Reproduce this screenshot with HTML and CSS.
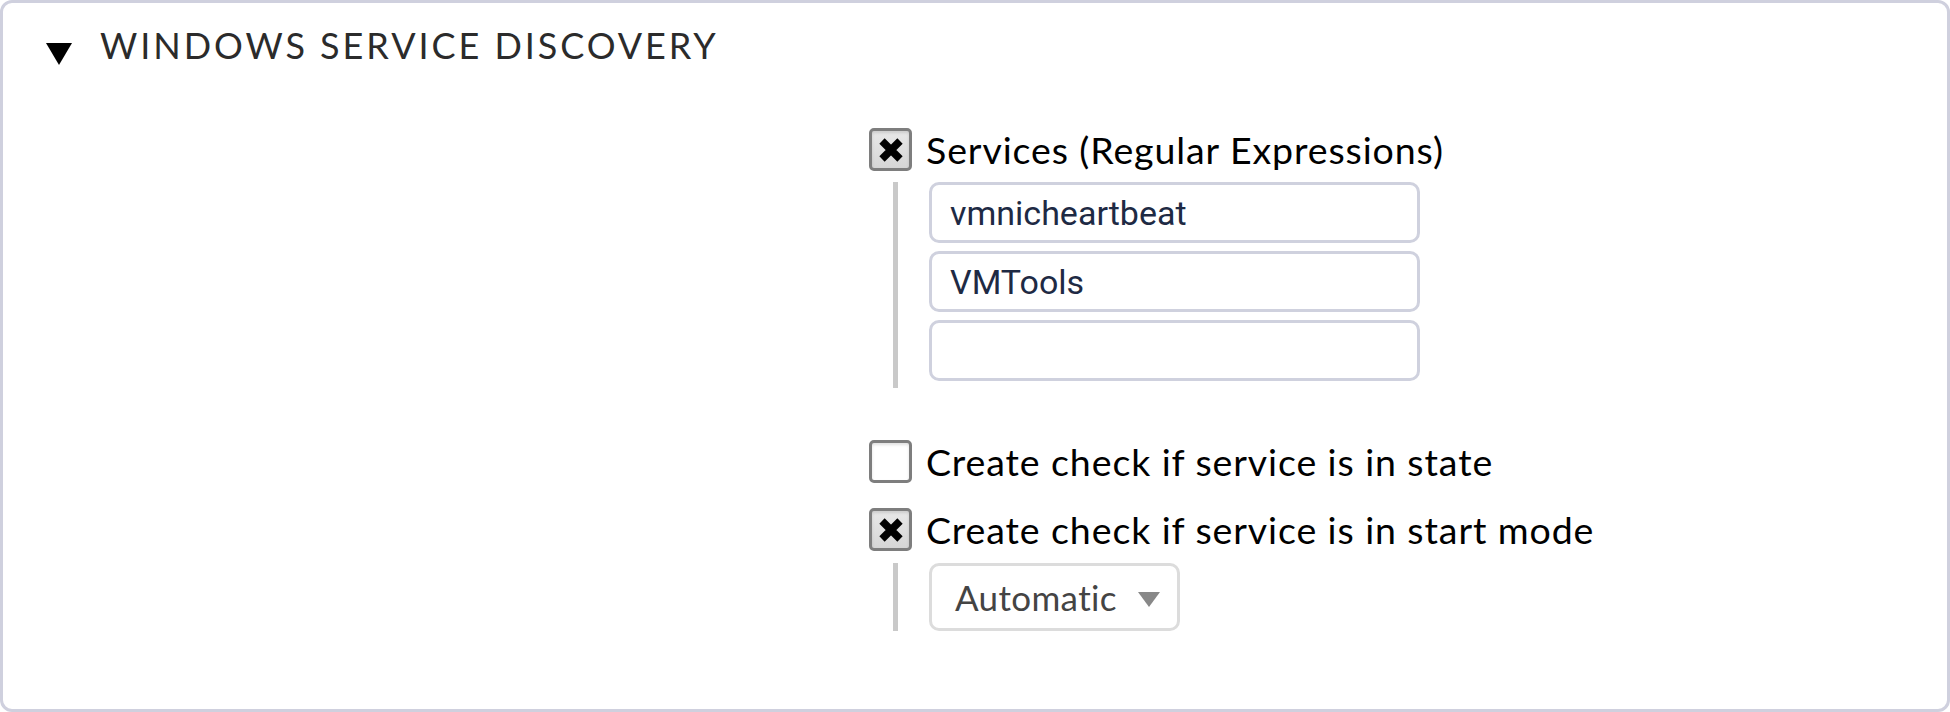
FILE: index.html
```html
<!DOCTYPE html>
<html>
<head>
<meta charset="utf-8">
<link rel="stylesheet" href="styles.css">
</head>
<body>
<div class="box">
  <div class="legend">
    <span class="tri"></span>
    <span class="title">WINDOWS SERVICE DISCOVERY</span>
  </div>
  <div class="body">
    <div class="labelcol"></div>
    <div class="content">
      <div class="cbrow">
        <span class="cb checked"><svg width="26" height="26" viewBox="0 0 26 26"><path d="M4 4 L22 22 M22 4 L4 22" stroke="#000" stroke-width="7.5"/></svg></span>
        <span class="lbl">Services (Regular Expressions)</span>
      </div>
      <div class="nested list">
        <div class="inputs">
          <div class="input">vmnicheartbeat</div>
          <div class="input">VMTools</div>
          <div class="input"></div>
        </div>
      </div>
      <div class="cbrow second">
        <span class="cb"></span>
        <span class="lbl">Create check if service is in state</span>
      </div>
      <div class="cbrow third">
        <span class="cb checked"><svg width="26" height="26" viewBox="0 0 26 26"><path d="M4 4 L22 22 M22 4 L4 22" stroke="#000" stroke-width="7.5"/></svg></span>
        <span class="lbl">Create check if service is in start mode</span>
      </div>
      <div class="nested sel">
        <div class="select"><span class="seltext">Automatic</span><span class="arrow"></span></div>
      </div>
    </div>
  </div>
</div>
</body>
</html>
```
FILE: styles.css
```css
html, body { margin: 0; padding: 0; background: #fff; }
.box {
  width: 1950px;
  height: 712px;
  box-sizing: border-box;
  border: 3px solid #cfd0de;
  border-radius: 12px;
  font-family: Lato, "Noto Sans", sans-serif;
}
.legend {
  display: flex;
  align-items: center;
  height: 88px;
  padding-left: 43px;
}
.tri {
  width: 0; height: 0;
  border-left: 13px solid transparent;
  border-right: 13px solid transparent;
  border-top: 22px solid #000;
  margin-top: 14px;
}
.title {
  margin-left: 28px;
  font-size: 36px;
  letter-spacing: 2.95px;
  color: #2b2b2b;
  margin-top: -4px;
}
.body {
  display: grid;
  grid-template-columns: 866px 1fr;
}
.content {
  display: flex;
  flex-direction: column;
  padding-top: 37px;
}
.cbrow {
  display: flex;
  align-items: center;
  height: 43px;
}
.cb {
  width: 43px; height: 43px;
  box-sizing: border-box;
  border: 3px solid #7e7e7e;
  border-radius: 5px;
  background: #fff;
  box-shadow: inset 0 2px 3px rgba(0,0,0,0.12);
  display: flex;
  align-items: center;
  justify-content: center;
}
.cb.checked {
  background: linear-gradient(#e8e8e8, #d6d6d6);
}
.lbl {
  margin-left: 14px;
  font-size: 37.5px;
  color: #000;
  letter-spacing: 0.9px;
}
.nested {
  margin-left: 24px;
  border-left: 5px solid #c9c9c9;
  padding-left: 31px;
}
.list { margin-top: 11px; height: 206px; }
.inputs { display: flex; flex-direction: column; gap: 8px; }
.input {
  width: 491px; height: 61px;
  box-sizing: border-box;
  border: 3px solid #cfd1de;
  border-radius: 10px;
  font-family: Roboto, "Liberation Sans", sans-serif;
  font-size: 34px;
  color: #1e2a44;
  padding-left: 18px;
  line-height: 56px;
}
.second { margin-top: 52px; }
.third { margin-top: 25px; }
.sel { margin-top: 12px; height: 68px; }
.select {
  width: 251px; height: 68px;
  box-sizing: border-box;
  border: 3px solid #dcdcdc;
  border-radius: 10px;
  display: flex;
  align-items: center;
  padding-left: 23px;
}
.seltext { font-size: 35px; color: #444; letter-spacing: 0.35px; }
.arrow {
  width: 0; height: 0;
  margin-left: 21px;
  margin-top: 4px;
  border-left: 11px solid transparent;
  border-right: 11px solid transparent;
  border-top: 15px solid #888;
}
```
